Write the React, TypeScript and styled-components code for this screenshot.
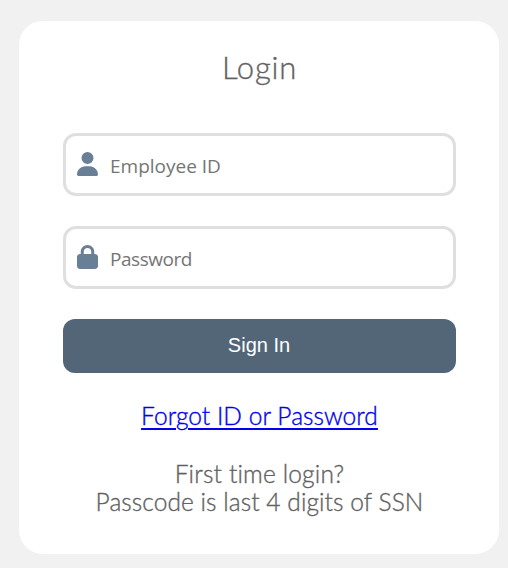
import React from "react";
import styled, { createGlobalStyle } from "styled-components";
import { FaLock, FaUser } from "react-icons/fa6";

const GlobalStyle = createGlobalStyle`
  * { box-sizing: border-box; }
  body { margin: 0; background: #f1f1f1; }
`;

const Page = styled.main`
  height: 568px;
  padding: 21px 9px 14px 19px;
  overflow: hidden;
  font-family: Lato, sans-serif;
  font-weight: 300;
  color: #626262;
  -webkit-text-stroke: 0.35px currentColor;
`;

const Card = styled.form`
  display: flex;
  flex-direction: column;
  height: 533px;
  padding: 28px 43px 0 44px;
  border-radius: 24px;
  background: #fff;
`;

const Title = styled.h1`
  margin: 0 0 48px;
  font-size: 31px;
  line-height: 36px;
  font-weight: 300;
  letter-spacing: 0.8px;
  text-align: center;
`;

const Field = styled.label`
  display: flex;
  align-items: center;
  height: 63px;
  margin-bottom: 30px;
  padding: 0 11px;
  border: 3px solid #dfdfdf;
  border-radius: 13px;

  svg {
    flex: none;
    width: 21px;
    height: 24px;
    margin-bottom: 1px;
    color: #687f96;
  }
`;

const Input = styled.input<{ $tracking: number }>`
  flex: 1;
  min-width: 0;
  margin-left: 12px;
  padding: 3px 0 0;
  border: 0;
  outline: 0;
  background: transparent;
  font: 400 19px "Open Sans", sans-serif;
  letter-spacing: ${(p) => p.$tracking}px;
  -webkit-text-stroke: 0;

  &::placeholder { color: #757575; opacity: 1; }
`;

const Button = styled.button`
  height: 54px;
  padding: 0 1px 2px 0;
  border: 0;
  border-radius: 12px;
  background: #526677;
  color: #fff;
  font: 400 20px "Liberation Sans", sans-serif;
  -webkit-text-stroke: 0;
`;

const Link = styled.a`
  align-self: center;
  margin: 29px 0 30px;
  color: #0000ee;
  font-size: 24.5px;
  line-height: 28px;
  letter-spacing: 0.05px;
  text-decoration-thickness: 2px;
  text-underline-offset: 3px;
`;

const Line = styled.p<{ $tracking: number }>`
  margin: 0;
  font-size: 24.5px;
  line-height: 28px;
  letter-spacing: ${(p) => p.$tracking}px;
  text-align: center;
  white-space: nowrap;
`;

export default function App() {
  return (
    <Page>
      <GlobalStyle />
      <Card onSubmit={(e) => e.preventDefault()}>
        <Title>Login</Title>
        <Field>
          <FaUser />
          <Input $tracking={0} placeholder="Employee ID" />
        </Field>
        <Field>
          <FaLock />
          <Input $tracking={-0.45} type="password" placeholder="Password" />
        </Field>
        <Button type="submit">Sign In</Button>
        <Link href="#">Forgot ID or Password</Link>
        <Line $tracking={0.17}>First time login?</Line>
        <Line $tracking={0.07}>Passcode is last 4 digits of SSN</Line>
      </Card>
    </Page>
  );
}
